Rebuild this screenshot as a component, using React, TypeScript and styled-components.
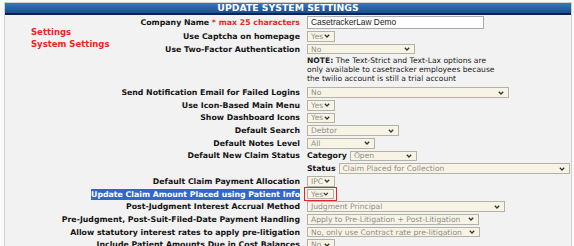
import React from 'react';
import styled, { createGlobalStyle } from 'styled-components';

const GlobalStyle = createGlobalStyle`
  html, body {
    margin: 0;
    padding: 0;
    background: #fafafa;
    overflow: hidden;
  }
  body {
    font-family: 'DejaVu Sans', Verdana, sans-serif;
  }
`;

const Page = styled.div`
  padding: 2px 3px 0 4px;
`;

const Panel = styled.div`
  width: 566px;
  height: 260px;
  background: #f2f2f2;
  border: 1px solid #d0d0d0;
  border-bottom: none;
`;

const Header = styled.div`
  height: 10px;
  line-height: 10px;
  background: linear-gradient(#3877c0, #15508f);
  border-bottom: 2px solid #0b2152;
  color: #fff;
  font-weight: bold;
  font-size: 9.3px;
  text-align: center;
`;

// nav | labels | values — nav only takes the top rows, later labels run across both
const Form = styled.div`
  display: grid;
  grid-template-columns: 120px 175px 1fr;
  column-gap: 0;
  row-gap: 2px;
  align-items: center;
  padding-top: 0.5px;
`;

const Nav = styled.div`
  grid-column: 1;
  grid-row: 1 / span 4;
  align-self: start;
  justify-self: start;
  margin: 10px 0 0 26px;
  color: #f21f1f;
  font-weight: bold;
  font-size: 8.5px;
  line-height: 12.6px;
`;

const Label = styled.div<{ $side?: boolean }>`
  grid-column: ${(p) => (p.$side ? '2' : '1 / 3')};
  justify-self: end;
  font-weight: bold;
  font-size: 7.8px;
  color: #141414;
  white-space: nowrap;
`;

const Req = styled.span`
  color: #ec2727;
`;

const Selected = styled.span`
  background: #3366cc;
  color: #fff;
  padding: 1px 0;
`;

const Value = styled.div`
  grid-column: 3;
  display: flex;
  align-items: center;
  gap: 3px;
  min-width: 0;
  padding-left: 7px;
`;

const Inline = styled.span`
  font-weight: bold;
  font-size: 7.8px;
  color: #141414;
`;

const TextInput = styled.div`
  box-sizing: border-box;
  width: 177px;
  height: 13.5px;
  background: #fff;
  border: 1px solid #a9a9a9;
  padding-left: 3px;
  font-family: 'Liberation Sans', Arial, sans-serif;
  font-size: 8.4px;
  line-height: 11.5px;
  color: #222;
`;

const SelectBox = styled.div<{ $w: number }>`
  box-sizing: border-box;
  width: ${(p) => p.$w}px;
  height: 10.7px;
  display: flex;
  align-items: center;
  justify-content: space-between;
  background: #f8f4e5;
  border: 1px solid #b4b2a6;
  padding: 0 4px 0 3px;
  font-size: 7.6px;
  color: #8e8e8e;
  white-space: nowrap;
  overflow: hidden;
`;

const RedBox = styled.div`
  border: 1px solid #e0262b;
  padding: 1px 2px;
  margin: -2px 0 -2px -3px;
`;

const Note = styled.div`
  grid-column: 3;
  padding: 1px 0 2px 7px;
  font-size: 7.6px;
  line-height: 8.6px;
  color: #222;
  white-space: nowrap;
`;

const Chevron = () => (
  <svg width="6" height="4" viewBox="0 0 6 4">
    <path d="M0.8 0.8 L3 3 L5.2 0.8" stroke="#333" strokeWidth="1.3" fill="none" />
  </svg>
);

const Select: React.FC<{ w: number; text: string }> = ({ w, text }) => (
  <SelectBox $w={w}>
    <span>{text}</span>
    <Chevron />
  </SelectBox>
);

const Row: React.FC<{
  label: React.ReactNode;
  side?: boolean;
  children: React.ReactNode;
}> = ({ label, side, children }) => (
  <>
    <Label $side={side}>{label}</Label>
    <Value>{children}</Value>
  </>
);

export default function App() {
  return (
    <Page>
      <GlobalStyle />
      <Panel>
        <Header>UPDATE SYSTEM SETTINGS</Header>
        <Form>
          <Nav>
            Settings
            <br />
            System Settings
          </Nav>
          <Row
            side
            label={
              <>
                Company Name <Req>* max 25 characters</Req>
              </>
            }
          >
            <TextInput>CasetrackerLaw Demo</TextInput>
          </Row>
          <Row side label="Use Captcha on homepage">
            <Select w={28} text="Yes" />
          </Row>
          <Row side label="Use Two-Factor Authentication">
            <Select w={108} text="No" />
          </Row>
          <Note>
            <b>NOTE:</b> The Text-Strict and Text-Lax options are
            <br />
            only available to casetracker employees because
            <br />
            the twilio account is still a trial account
          </Note>
          <Row label="Send Notification Email for Failed Logins">
            <Select w={202} text="No" />
          </Row>
          <Row label="Use Icon-Based Main Menu">
            <Select w={28} text="Yes" />
          </Row>
          <Row label="Show Dashboard Icons">
            <Select w={28} text="Yes" />
          </Row>
          <Row label="Default Search">
            <Select w={92} text="Debtor" />
          </Row>
          <Row label="Default Notes Level">
            <Select w={68} text="All" />
          </Row>
          <Row label="Default New Claim Status">
            <Inline>Category</Inline>
            <Select w={67} text="Open" />
          </Row>
          <Value>
            <Inline>Status</Inline>
            <Select w={231} text="Claim Placed for Collection" />
          </Value>
          <Row label="Default Claim Payment Allocation">
            <Select w={28} text="IPC" />
          </Row>
          <Row label={<Selected>Update Claim Amount Placed using Patient Info</Selected>}>
            <RedBox>
              <Select w={27} text="Yes" />
            </RedBox>
          </Row>
          <Row label="Post-Judgment Interest Accrual Method">
            <Select w={198} text="Judgment Principal" />
          </Row>
          <Row label="Pre-Judgment, Post-Suit-Filed-Date Payment Handling">
            <Select w={172} text="Apply to Pre-Litigation + Post-Litigation" />
          </Row>
          <Row label="Allow statutory interest rates to apply pre-litigation">
            <Select w={173} text="No, only use Contract rate pre-litigation" />
          </Row>
          <Row label="Include Patient Amounts Due in Cost Balances">
            <Select w={28} text="No" />
          </Row>
        </Form>
      </Panel>
    </Page>
  );
}
